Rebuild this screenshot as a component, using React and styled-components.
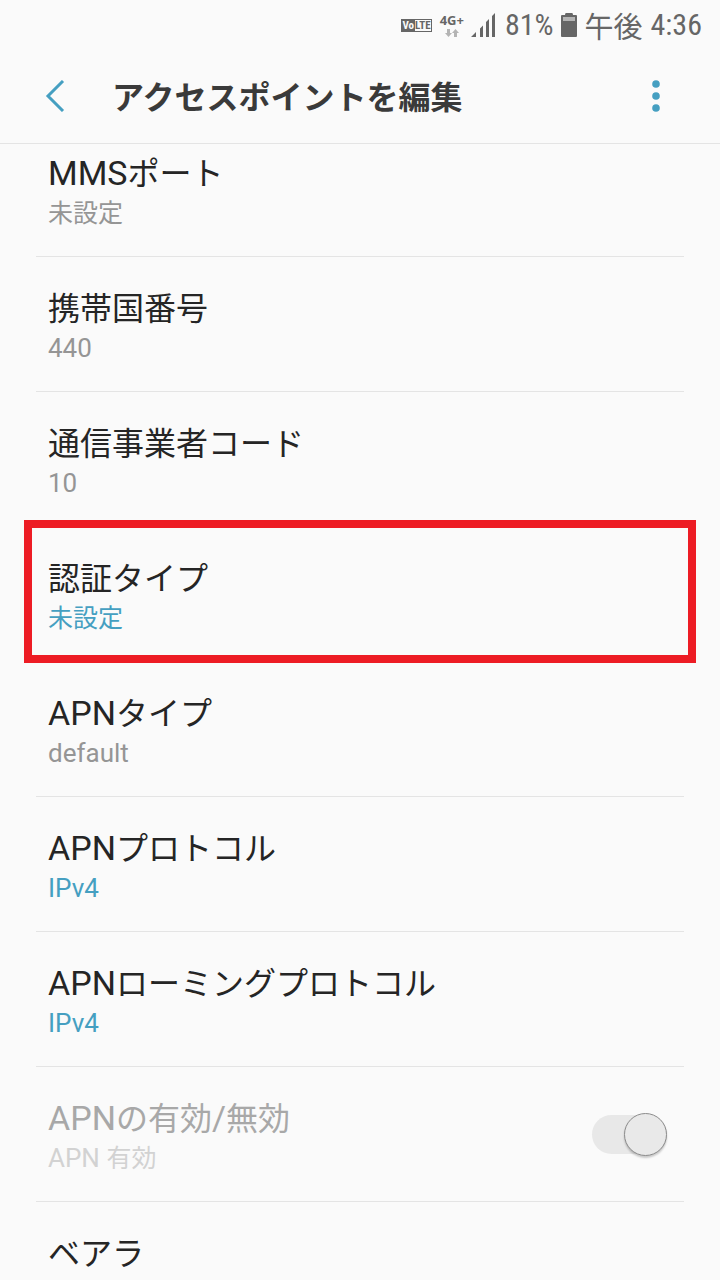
import { useLayoutEffect, useRef } from "react";
import styled, { createGlobalStyle } from "styled-components";

const GlobalStyle = createGlobalStyle`
  *,
  *::before,
  *::after {
    box-sizing: border-box;
  }

  body {
    margin: 0;
    background: #fafafa;
    font-family: Roboto, "Noto Sans CJK JP", sans-serif;
  }

  button {
    border: none;
    background: none;
    padding: 0;
    font: inherit;
    color: inherit;
    cursor: pointer;
  }
`;

const Screen = styled.div`
  display: flex;
  flex-direction: column;
  height: 100vh;
  background: #fafafa;
`;

const StatusBar = styled.div`
  display: flex;
  flex-shrink: 0;
  align-items: center;
  justify-content: flex-end;
  height: 50px;
  padding: 0 18px;
  color: #666;
  font-family: "Roboto Condensed", "Liberation Sans Narrow", Roboto,
    "Noto Sans CJK JP", sans-serif;
  font-size: 30px;
  line-height: 36px;
  white-space: nowrap;
`;

const Volte = styled.span`
  display: flex;
  margin-right: 8px;
  border: 1px solid #666;
  font-size: 11px;
  font-weight: 700;
  line-height: 11px;
`;

const VolteMark = styled.span`
  padding: 0 1px;
  background: #666;
  color: #fafafa;
`;

const Network = styled.span`
  display: flex;
  flex-direction: column;
  align-items: center;
  gap: 2px;
  margin-right: 7px;
  font-family: "Noto Sans", sans-serif;
  font-size: 13px;
  font-weight: 700;
  line-height: 14px;
`;

const Signal = styled.svg`
  margin-right: 9px;
`;

const Battery = styled.svg`
  margin: 0 8px 0 7px;
`;

const Clock = styled.span`
  display: flex;
  align-items: center;
  gap: 8px;
`;

const Period = styled.span`
  font-family: "Noto Sans CJK JP", sans-serif;
  font-size: 29px;
`;

const Header = styled.header`
  display: flex;
  flex-shrink: 0;
  align-items: center;
  height: 94px;
  padding: 0 44px 0 36px;
  border-bottom: 1px solid #e4e4e4;
`;

const IconButton = styled.button`
  display: flex;
  align-items: center;
  justify-content: center;
  width: 40px;
  height: 48px;
  padding-bottom: 2px;
  color: #459fc1;
`;

const PageTitle = styled.h1`
  flex: 1;
  margin: 0 0 0 36px;
  padding-top: 2px;
  color: #3a3a3a;
  font-size: 32px;
  font-weight: 700;
  line-height: 40px;
`;

const List = styled.ul`
  flex: 1;
  min-height: 0;
  margin: 0;
  padding: 0 36px;
  overflow-y: auto;
  list-style: none;
  scrollbar-width: none;
`;

const Item = styled.li`
  position: relative;
  border-bottom: 1px solid #e4e4e4;

  ${(props) =>
    props.$highlighted &&
    `
    &::after {
      content: "";
      position: absolute;
      inset: -7px -12px -2px;
      border: 8px solid #ed1c24;
      pointer-events: none;
    }
  `}
`;

const Row = styled.button`
  display: flex;
  align-items: center;
  justify-content: space-between;
  width: 100%;
  padding: 0 12px;
  text-align: left;
`;

const Texts = styled.span`
  display: flex;
  flex-direction: column;
  gap: 2px;
  padding: 31px 0 25px;
`;

const Title = styled.span`
  color: ${(props) => (props.$disabled ? "#a8a8a8" : "#252525")};
  font-size: 34px;
  line-height: 40px;
`;

const Value = styled.span`
  color: ${(props) =>
    props.$disabled ? "#d2d2d2" : props.$accent ? "#459fc1" : "#959595"};
  font-size: 26px;
  line-height: 36px;
`;

const TitleKana = styled.span`
  font-size: 32px;
  line-height: 1;
`;

const ValueKana = styled.span`
  font-size: 25px;
  line-height: 1;
`;

const Switch = styled.input`
  appearance: none;
  display: flex;
  align-items: center;
  justify-content: flex-end;
  width: 75px;
  height: 39px;
  margin: 0 5px 0 0;
  border-radius: 20px;
  background: #e8e8e8;

  &::before {
    content: "";
    width: 43px;
    height: 43px;
    border: 1px solid #8c8c8c;
    border-radius: 50%;
    background: #e9e9e9;
    box-shadow: 0 2px 2px rgba(0, 0, 0, 0.2);
  }
`;

const settings = [
  { title: "MMSポート", value: "未設定" },
  { title: "携帯国番号", value: "440" },
  { title: "通信事業者コード", value: "10" },
  { title: "認証タイプ", value: "未設定", accent: true, highlighted: true },
  { title: "APNタイプ", value: "default" },
  { title: "APNプロトコル", value: "IPv4", accent: true },
  { title: "APNローミングプロトコル", value: "IPv4", accent: true },
  { title: "APNの有効/無効", value: "APN 有効", toggle: true },
  { title: "ベアラ" },
];

// Japanese runs are set slightly smaller than the Latin text beside them
function mixScripts(text, Kana) {
  return text
    .split(/([\u3000-\u9fff]+)/)
    .filter(Boolean)
    .map((part, i) =>
      /[\u3000-\u9fff]/.test(part) ? <Kana key={i}>{part}</Kana> : part
    );
}

function Setting({ title, value, accent, highlighted, toggle }) {
  return (
    <Item $highlighted={highlighted}>
      <Row as={toggle ? "label" : "button"}>
        <Texts>
          <Title $disabled={toggle}>{mixScripts(title, TitleKana)}</Title>
          {value && (
            <Value $disabled={toggle} $accent={accent}>
              {mixScripts(value, ValueKana)}
            </Value>
          )}
        </Texts>
        {toggle && (
          <Switch type="checkbox" role="switch" defaultChecked disabled />
        )}
      </Row>
    </Item>
  );
}

function App() {
  const listRef = useRef(null);

  useLayoutEffect(() => {
    listRef.current.scrollTop = 22;
  }, []);

  return (
    <>
      <GlobalStyle />
      <Screen>
        <StatusBar>
          <Volte>
            <VolteMark>Vo</VolteMark>
            <span>LTE</span>
          </Volte>
          <Network>
            4G+
            <svg width="14" height="8" viewBox="0 0 14 8" fill="#b4b4b4">
              <path d="M2 0h3v4h2L3.500 8 0 4h2z" />
              <path d="M9 8h3V4h2L10.500 0 7 4h2z" />
            </svg>
          </Network>
          <Signal width="25" height="24" viewBox="0 0 25 24" fill="#666">
            <path d="M0 24 5 19V24zM9 15.500l3-3V24H9zM15 9l3-3V24h-3zM21 3l3-3V24h-3z" />
          </Signal>
          <span>81%</span>
          <Battery width="16" height="24" viewBox="0 0 16 24">
            <path
              d="M5 0h6q1 0 1 2h3q1 0 1 1v20q0 1-1 1H1q-1 0-1-1V3q0-1 1-1h3q0-2 1-2z"
              fill="#666"
            />
            <path d="M2 4h12v4H2z" fill="#b4b4b4" />
          </Battery>
          <Clock>
            <Period>午後</Period>
            <span>4:36</span>
          </Clock>
        </StatusBar>

        <Header>
          <IconButton aria-label="戻る">
            <svg width="22" height="32" viewBox="0 0 22 32">
              <path
                d="M18 1 3 16l15 15"
                fill="none"
                stroke="currentColor"
                strokeWidth="3"
              />
            </svg>
          </IconButton>
          <PageTitle>アクセスポイントを編集</PageTitle>
          <IconButton aria-label="その他のオプション">
            <svg width="8" height="32" viewBox="0 0 8 32" fill="currentColor">
              <circle cx="4" cy="4" r="3.800" />
              <circle cx="4" cy="16" r="3.800" />
              <circle cx="4" cy="28" r="3.800" />
            </svg>
          </IconButton>
        </Header>

        <List ref={listRef}>
          {settings.map((setting) => (
            <Setting key={setting.title} {...setting} />
          ))}
        </List>
      </Screen>
    </>
  );
}

export default App;
